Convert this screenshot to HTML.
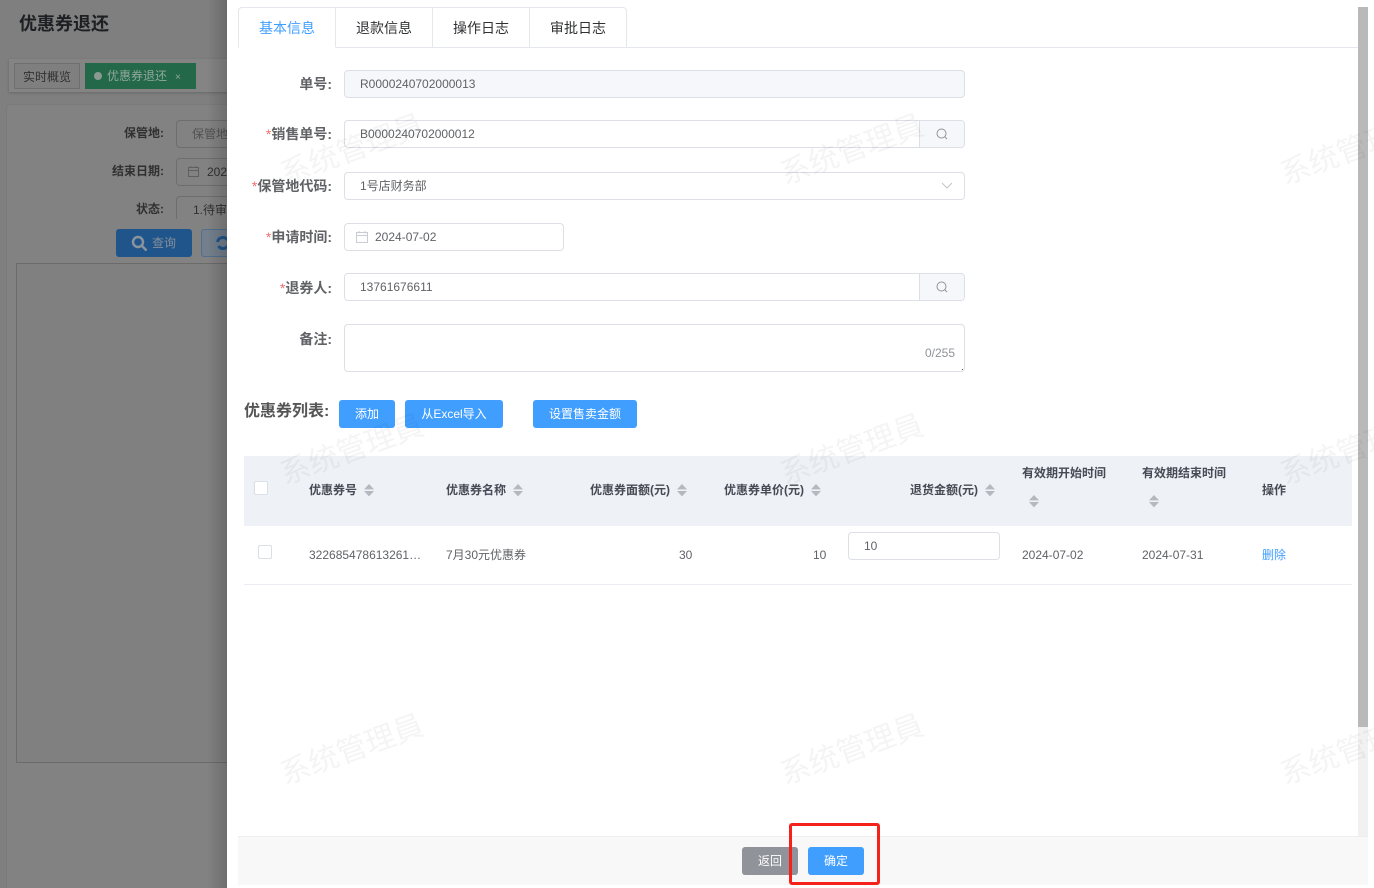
<!DOCTYPE html>
<html><head><meta charset="utf-8"><style>
*{box-sizing:border-box}
html,body{margin:0;padding:0;width:1374px;height:888px;overflow:hidden;background:#fff}
body{font-family:"Liberation Sans","Noto Sans CJK SC",sans-serif;font-size:12px;color:#606266;position:relative}
.a{position:absolute;white-space:nowrap}
.lbl{position:absolute;right:1042px;font-weight:700;font-size:14px;color:#606266;white-space:nowrap;line-height:18px}
.lbl i{color:#f56c6c;font-style:normal;font-weight:400}
.in{position:absolute;border:1px solid #dcdfe6;border-radius:4px;background:#fff;height:28px;left:344px;width:621px;line-height:26px;padding-left:15px;white-space:nowrap;overflow:hidden}
.app{position:absolute;border-left:1px solid #dcdfe6;background:#f5f7fa;right:0;top:0;bottom:0;width:45px}
.btn{position:absolute;background:#409eff;color:#fff;border-radius:3px;height:28px;line-height:28px;text-align:center;font-size:12px;white-space:nowrap}
.tab{position:absolute;top:7px;height:41px;border:1px solid #e4e7ed;border-left:none;line-height:41px;text-align:center;font-size:14px;color:#303133;width:97px;background:#fff}
.th{position:absolute;font-weight:700;font-size:12px;color:#454a54;line-height:16px;white-space:nowrap}
.td{position:absolute;font-size:12px;color:#606266;line-height:16px;white-space:nowrap}
.wm{position:absolute;font-size:30px;color:rgba(0,0,0,.045);transform:rotate(-20deg);white-space:nowrap;line-height:36px;width:160px}
.sort{position:absolute;width:10px;height:13px}
.dk{position:absolute;white-space:nowrap}
</style></head><body>
<!-- dimmed background -->
<div class="a" style="left:0;top:0;width:227px;height:888px;background:#7f7f7f;overflow:hidden">
 <div class="dk" style="left:19px;top:12px;font-size:18px;font-weight:700;color:#1d1f22;line-height:24px">优惠券退还</div>
 <div class="dk" style="left:9px;top:59px;width:240px;height:33px;background:#848484;box-shadow:0 1px 3px rgba(0,0,0,.2)"></div>
 <div class="dk" style="left:14px;top:63px;width:66px;height:26px;border:1px solid #6f6f6f;line-height:26px;text-align:center;color:#303030;font-size:12px;background:#7f7f7f">实时概览</div>
 <div class="dk" style="left:85px;top:63px;width:111px;height:26px;background:#24684a;color:#8fa89c;line-height:27px;font-size:12px;padding-left:9px"><span style="display:inline-block;width:8px;height:8px;border-radius:50%;background:#8a9a92;margin-right:5px"></span>优惠券退还<span style="margin-left:8px;font-size:10px">×</span></div>
 <div class="dk" style="left:6px;top:104px;width:240px;height:800px;background:#828282;border:1px solid #7a7a7a;border-radius:4px"></div>
 <div class="dk" style="right:63px;top:124px;font-weight:700;color:#303030;font-size:12px;line-height:18px">保管地:</div>
 <div class="dk" style="left:176px;top:120px;width:70px;height:28px;border:1px solid #6e6e6e;border-radius:4px;padding-left:15px;line-height:26px;color:#525252">保管地点</div>
 <div class="dk" style="right:63px;top:162px;font-weight:700;color:#303030;font-size:12px;line-height:18px">结束日期:</div>
 <div class="dk" style="left:176px;top:158px;width:70px;height:28px;border:1px solid #6e6e6e;border-radius:4px;padding-left:30px;line-height:26px;color:#303030">2024</div>
 <svg class="dk" style="left:187px;top:165px" width="13" height="13" viewBox="0 0 13 13" fill="none" stroke="#5f5f5f"><rect x="1.5" y="2.5" width="10" height="9"/><path d="M1.5 5.5h10M4 1v2M9 1v2"/></svg>
 <div class="dk" style="right:63px;top:200px;font-weight:700;color:#303030;font-size:12px;line-height:18px">状态:</div>
 <div class="dk" style="left:176px;top:196px;width:70px;height:23px;border:1px solid #6e6e6e;border-bottom:none;border-radius:4px 4px 0 0;padding-left:16px;line-height:26px;color:#303030">1.待审核</div>
 <div class="dk" style="left:116px;top:229px;width:76px;height:28px;background:#20558c;border-radius:3px;color:#858f99;font-size:12px;line-height:28px;padding-left:36px">查询</div>
 <svg class="dk" style="left:131px;top:235px" width="17" height="17" viewBox="0 0 17 17" fill="none" stroke="#8a949e" stroke-width="2.4"><circle cx="7" cy="7" r="5"/><path d="M10.5 10.5l5 5"/></svg>
 <div class="dk" style="left:201px;top:229px;width:50px;height:28px;background:#737f8c;border:1px solid #516f8f;border-radius:3px"></div>
 <svg class="dk" style="left:216px;top:236px" width="14" height="14" viewBox="0 0 14 14" fill="none" stroke="#20558c" stroke-width="3"><path d="M1.5 6a5.5 5.5 0 0 1 10-2M12.5 8a5.5 5.5 0 0 1-10 2"/></svg>
 <div class="dk" style="left:16px;top:263px;width:240px;height:500px;border:1px solid #6b6b6b;background:#808080"></div>
 <div class="dk" style="left:207px;top:0;width:20px;height:888px;background:linear-gradient(to right,rgba(0,0,0,0),rgba(0,0,0,.16))"></div>
</div>

<!-- tabs -->
<div class="a" style="left:238px;top:47px;width:1120px;height:1px;background:#e4e7ed"></div>
<div class="tab" style="left:238px;width:98px;border-left:1px solid #e4e7ed;border-bottom-color:#fff;color:#409eff;border-top-left-radius:4px">基本信息</div>
<div class="tab" style="left:336px">退款信息</div>
<div class="tab" style="left:433px">操作日志</div>
<div class="tab" style="left:530px;border-top-right-radius:4px">审批日志</div>

<!-- form -->
<div class="lbl" style="top:75px">单号:</div>
<div class="in" style="top:70px;background:#f5f7fa;color:#606266">R0000240702000013</div>
<div class="lbl" style="top:125px"><i>*</i>销售单号:</div>
<div class="in" style="top:120px">B0000240702000012<div class="app"><svg style="position:absolute;left:16px;top:7px" width="12" height="12" viewBox="0 0 12 12" fill="none" stroke="#909399"><circle cx="5.5" cy="5.5" r="4.5"/><path d="M9 9l2 2"/></svg></div></div>
<div class="lbl" style="top:177px"><i>*</i>保管地代码:</div>
<div class="in" style="top:172px">1号店财务部<svg style="position:absolute;left:596px;top:9px" width="12" height="8" viewBox="0 0 12 8" fill="none" stroke="#c0c4cc"><path d="M1 1l5 5 5-5"/></svg></div>
<div class="lbl" style="top:228px"><i>*</i>申请时间:</div>
<div class="in" style="top:223px;width:220px;padding-left:30px">2024-07-02<svg style="position:absolute;left:11px;top:7px" width="12" height="12" viewBox="0 0 12 12" fill="none" stroke="#c9ccd4"><rect x=".5" y="1.5" width="11" height="10"/><path d="M.5 4.5h11M3 0v2.5M9 0v2.5"/></svg></div>
<div class="lbl" style="top:279px"><i>*</i>退券人:</div>
<div class="in" style="top:273px">13761676611<div class="app"><svg style="position:absolute;left:16px;top:7px" width="12" height="12" viewBox="0 0 12 12" fill="none" stroke="#909399"><circle cx="5.5" cy="5.5" r="4.5"/><path d="M9 9l2 2"/></svg></div></div>
<div class="lbl" style="top:330px">备注:</div>
<div class="in" style="top:324px;height:48px"><span style="position:absolute;right:9px;bottom:11px;color:#909399;line-height:14px">0/255</span><span style="position:absolute;right:1px;bottom:1px;width:1px;height:1px;background:#555"></span></div>

<!-- list header -->
<div class="a" style="left:244px;top:401px;font-size:16px;font-weight:700;color:#555;line-height:22px">优惠券列表:</div>
<div class="btn" style="left:339px;top:400px;width:56px">添加</div>
<div class="btn" style="left:405px;top:400px;width:98px">从Excel导入</div>
<div class="btn" style="left:533px;top:400px;width:104px">设置售卖金额</div>

<!-- table -->
<div class="a" style="left:244px;top:456px;width:1108px;height:70px;background:#eef1f6"></div>
<div class="a" style="left:244px;top:584px;width:1108px;height:1px;background:#ebeef5"></div>
<div class="a" style="left:254px;top:481px;width:14px;height:14px;background:#fff;border:1px solid #dcdfe6;border-radius:2px"></div>
<div class="a" style="left:258px;top:545px;width:14px;height:14px;background:#fff;border:1px solid #dcdfe6;border-radius:2px"></div>
<svg width="0" height="0" style="position:absolute"><defs><g id="s"><path d="M5 0l5 5.4H0z" fill="#b4b8bf"/><path d="M0 7h10l-5 5.4z" fill="#b4b8bf"/></g></defs></svg>
<div class="th" style="left:309px;top:482px">优惠券号</div><svg class="sort" style="left:364px;top:484px"><use href="#s"/></svg>
<div class="th" style="left:446px;top:482px">优惠券名称</div><svg class="sort" style="left:513px;top:484px"><use href="#s"/></svg>
<div class="th" style="left:590px;top:482px">优惠券面额(元)</div><svg class="sort" style="left:677px;top:484px"><use href="#s"/></svg>
<div class="th" style="left:724px;top:482px">优惠券单价(元)</div><svg class="sort" style="left:811px;top:484px"><use href="#s"/></svg>
<div class="th" style="left:910px;top:482px">退货金额(元)</div><svg class="sort" style="left:985px;top:484px"><use href="#s"/></svg>
<div class="th" style="left:1022px;top:465px">有效期开始时间</div><svg class="sort" style="left:1029px;top:495px"><use href="#s"/></svg>
<div class="th" style="left:1142px;top:465px">有效期结束时间</div><svg class="sort" style="left:1149px;top:495px"><use href="#s"/></svg>
<div class="th" style="left:1262px;top:482px">操作</div>
<div class="td" style="left:309px;top:547px">322685478613261…</div>
<div class="td" style="left:446px;top:547px">7月30元优惠券</div>
<div class="td" style="left:679px;top:547px">30</div>
<div class="td" style="left:813px;top:547px">10</div>
<div class="in" style="left:848px;top:532px;width:152px;padding-left:15px">10</div>
<div class="td" style="left:1022px;top:547px">2024-07-02</div>
<div class="td" style="left:1142px;top:547px">2024-07-31</div>
<div class="td" style="left:1262px;top:547px;color:#409eff">删除</div>

<!-- scrollbar -->
<div class="a" style="left:1358px;top:7px;width:10px;height:829px;background:#f1f1f1"></div>
<div class="a" style="left:1358px;top:7px;width:10px;height:720px;background:#b9b9b9"></div>

<!-- footer -->
<div class="a" style="left:238px;top:836px;width:1130px;height:49px;background:#f8f8f8;border-top:1px solid #eee"></div>
<div class="btn" style="left:742px;top:847px;width:56px;background:#909399">返回</div>
<div class="btn" style="left:808px;top:847px;width:56px">确定</div>
<div class="a" style="left:789px;top:823px;width:91px;height:62px;border:3px solid #f5221b;border-radius:3px"></div>

<!-- watermarks -->
<div class="wm" style="left:277px;top:131px">系统管理員</div>
<div class="wm" style="left:777px;top:131px">系统管理員</div>
<div class="wm" style="left:1277px;top:131px">系统管理員</div>
<div class="wm" style="left:277px;top:431px">系统管理員</div>
<div class="wm" style="left:777px;top:431px">系统管理員</div>
<div class="wm" style="left:1277px;top:431px">系统管理員</div>
<div class="wm" style="left:277px;top:731px">系统管理員</div>
<div class="wm" style="left:777px;top:731px">系统管理員</div>
<div class="wm" style="left:1277px;top:731px">系统管理員</div>
</body></html>
